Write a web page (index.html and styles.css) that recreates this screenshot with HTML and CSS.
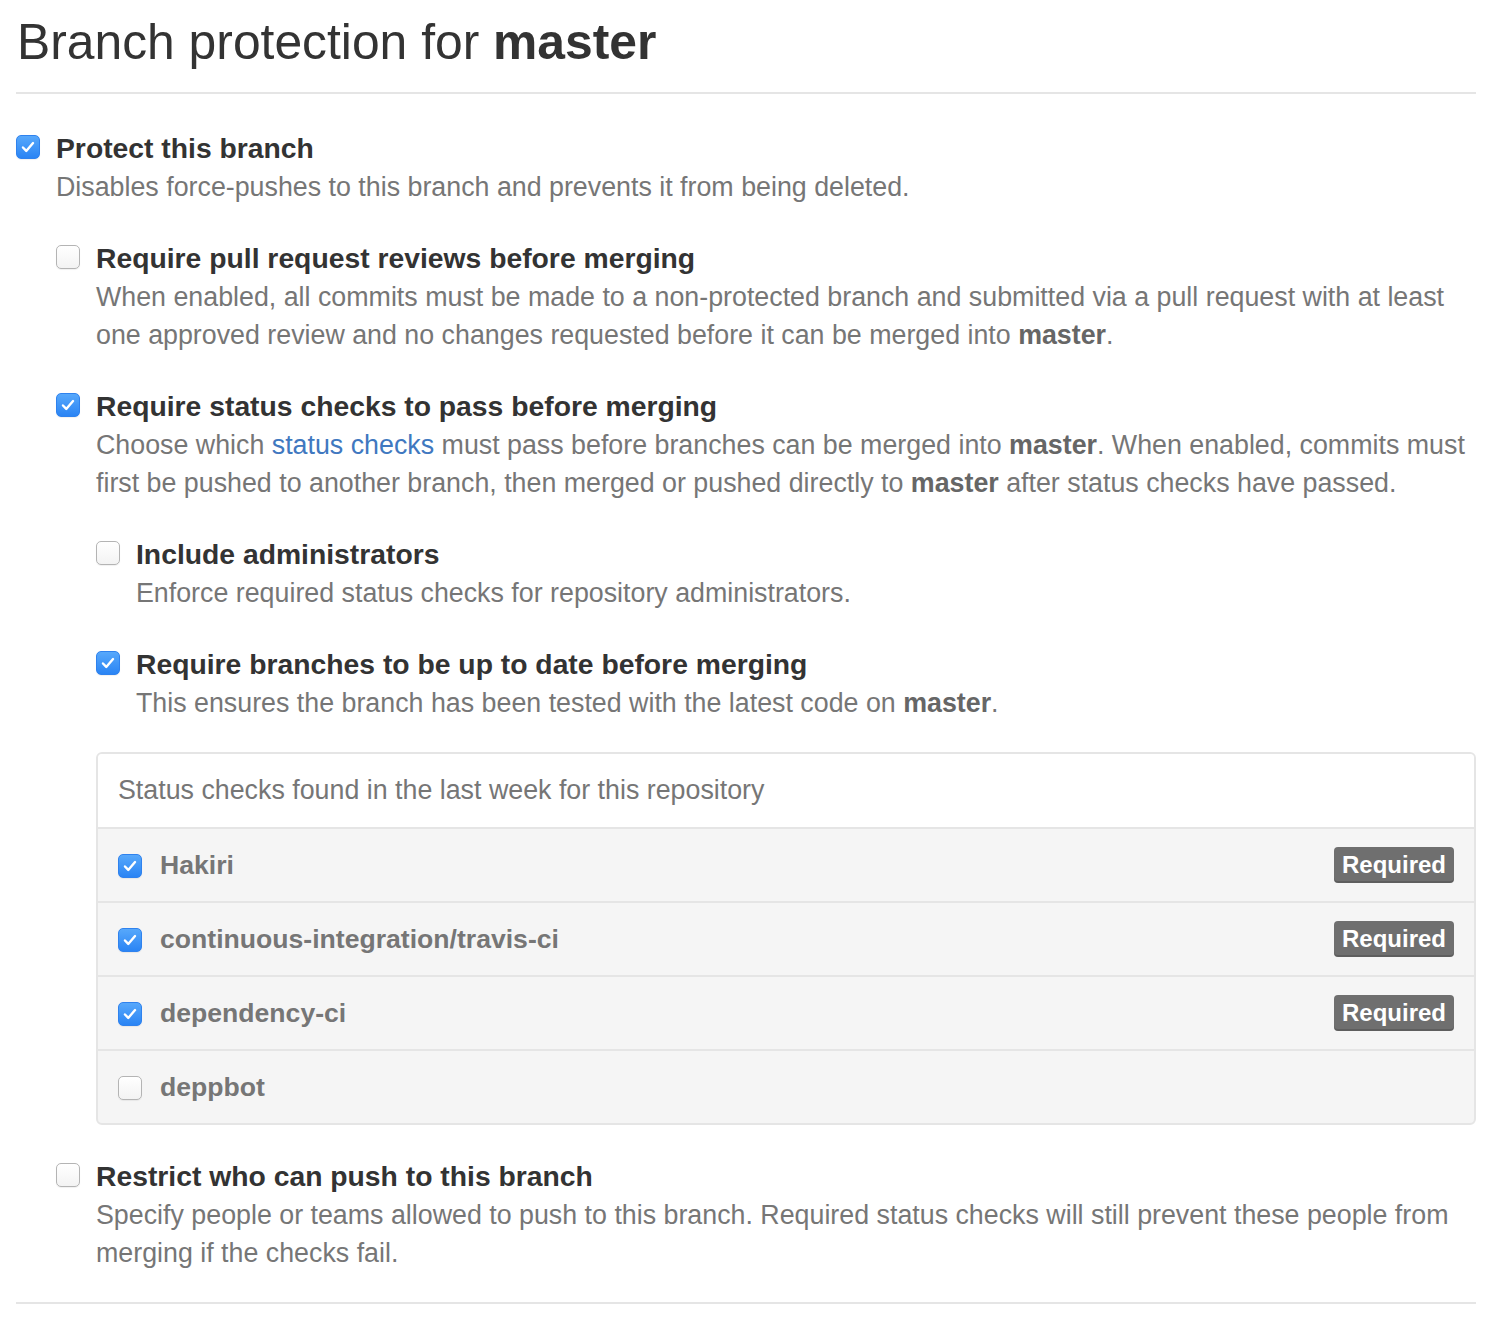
FILE: index.html
```html
<!DOCTYPE html>
<html lang="en">
<head>
<meta charset="utf-8">
<title>Branch protection for master</title>
<link rel="stylesheet" href="styles.css">
</head>
<body>
<div class="page">
  <h2 class="title">Branch protection for <strong>master</strong></h2>

  <div class="opt opt-top">
    <span class="cb on"><svg viewBox="0 0 24 24"><path d="M6.5 12.5l3.6 3.8 7.4-8.6"/></svg></span>
    <div class="opt-body">
      <div class="opt-head">Protect this branch</div>
      <div class="note">Disables force-pushes to this branch and prevents it from being deleted.</div>

      <div class="opt">
        <span class="cb"></span>
        <div class="opt-body">
          <div class="opt-head">Require pull request reviews before merging</div>
          <div class="note">When enabled, all commits must be made to a non-protected branch and submitted via a pull request with at least one approved review and no changes requested before it can be merged into <strong>master</strong>.</div>
        </div>
      </div>

      <div class="opt">
        <span class="cb on"><svg viewBox="0 0 24 24"><path d="M6.5 12.5l3.6 3.8 7.4-8.6"/></svg></span>
        <div class="opt-body">
          <div class="opt-head">Require status checks to pass before merging</div>
          <div class="note">Choose which <a class="link" href="#">status checks</a> must pass before branches can be merged into <strong>master</strong>. When enabled, commits must first be pushed to another branch, then merged or pushed directly to <strong>master</strong> after status checks have passed.</div>

          <div class="opt">
            <span class="cb"></span>
            <div class="opt-body">
              <div class="opt-head">Include administrators</div>
              <div class="note">Enforce required status checks for repository administrators.</div>
            </div>
          </div>

          <div class="opt">
            <span class="cb on"><svg viewBox="0 0 24 24"><path d="M6.5 12.5l3.6 3.8 7.4-8.6"/></svg></span>
            <div class="opt-body">
              <div class="opt-head">Require branches to be up to date before merging</div>
              <div class="note">This ensures the branch has been tested with the latest code on <strong>master</strong>.</div>
            </div>
          </div>

          <div class="checks">
            <div class="checks-header">Status checks found in the last week for this repository</div>
            <div class="check-row">
              <span class="cb on"><svg viewBox="0 0 24 24"><path d="M6.5 12.5l3.6 3.8 7.4-8.6"/></svg></span>
              <span class="check-name">Hakiri</span>
              <span class="badge">Required</span>
            </div>
            <div class="check-row">
              <span class="cb on"><svg viewBox="0 0 24 24"><path d="M6.5 12.5l3.6 3.8 7.4-8.6"/></svg></span>
              <span class="check-name">continuous-integration/travis-ci</span>
              <span class="badge">Required</span>
            </div>
            <div class="check-row">
              <span class="cb on"><svg viewBox="0 0 24 24"><path d="M6.5 12.5l3.6 3.8 7.4-8.6"/></svg></span>
              <span class="check-name">dependency-ci</span>
              <span class="badge">Required</span>
            </div>
            <div class="check-row">
              <span class="cb"></span>
              <span class="check-name">deppbot</span>
            </div>
          </div>
        </div>
      </div>

      <div class="opt opt-after-box">
        <span class="cb"></span>
        <div class="opt-body">
          <div class="opt-head">Restrict who can push to this branch</div>
          <div class="note">Specify people or teams allowed to push to this branch. Required status checks will still prevent these people from merging if the checks fail.</div>
        </div>
      </div>
    </div>
  </div>

  <div class="rule"></div>
</div>
</body>
</html>
```

FILE: styles.css
```css
html, body {
  margin: 0;
  padding: 0;
  background: #fff;
}

body {
  font-family: "Liberation Sans", Arial, Helvetica, sans-serif;
  color: #333;
}

.page {
  width: 1460px;
  margin: 0 16px;
  padding-top: 12px;
}

.title {
  margin: 0;
  font-size: 49.8px;
  font-weight: normal;
  line-height: 60px;
  padding: 0 0 20px 1px;
  border-bottom: 2px solid #e5e5e5;
  color: #333;
}

.title strong {
  font-weight: bold;
}

.opt {
  display: flex;
  align-items: flex-start;
  margin-top: 33px;
}

.opt-top {
  margin-top: 35px;
}

.opt-after-box {
  margin-top: 32px;
}

.opt-body {
  flex: 1;
  min-width: 0;
}

.opt-head {
  font-size: 28.3px;
  font-weight: bold;
  line-height: 38px;
  color: #333;
}

.note {
  margin-top: 1px;
  font-size: 26.8px;
  line-height: 38px;
  color: #767676;
}

.note strong {
  color: #666;
  font-weight: bold;
}

.link {
  color: #4078c0;
  text-decoration: none;
}

.cb {
  flex: none;
  box-sizing: border-box;
  width: 24px;
  height: 24px;
  margin: 6px 16px 0 0;
  border-radius: 5px;
  border: 1px solid #b4b4b4;
  background: linear-gradient(#ffffff, #f3f3f3);
  box-shadow: 0 1px 1px rgba(0, 0, 0, 0.06);
  display: flex;
  align-items: center;
  justify-content: center;
}

.cb.on {
  border: 1px solid #2f82ee;
  background: linear-gradient(#57a8fb, #2a84f4);
}

.cb svg {
  width: 22px;
  height: 22px;
  fill: none;
  stroke: #fff;
  stroke-width: 2.6;
  stroke-linecap: round;
  stroke-linejoin: round;
}

.checks {
  margin-top: 30px;
  border: 2px solid #e5e5e5;
  border-radius: 6px;
  overflow: hidden;
  background: #f5f5f5;
}

.checks-header {
  background: #fff;
  height: 73px;
  padding: 0 20px;
  display: flex;
  align-items: center;
  font-size: 26.8px;
  color: #767676;
}

.check-row {
  display: flex;
  align-items: center;
  height: 72px;
  padding: 0 20px;
  border-top: 2px solid #e5e5e5;
}

.check-row .cb {
  margin: 2px 18px 0 0;
}

.check-name {
  flex: 1;
  font-size: 26.6px;
  font-weight: bold;
  color: #767676;
}

.badge {
  flex: none;
  height: 36px;
  padding: 0 8px;
  box-sizing: border-box;
  display: flex;
  align-items: center;
  border-radius: 4px;
  background: #6f6f6f;
  box-shadow: inset 0 -2px 0 rgba(0, 0, 0, 0.15);
  color: #fff;
  font-size: 24px;
  font-weight: bold;
}

.rule {
  margin-top: 30px;
  border-top: 2px solid #e5e5e5;
  margin-bottom: 20px;
}
```
